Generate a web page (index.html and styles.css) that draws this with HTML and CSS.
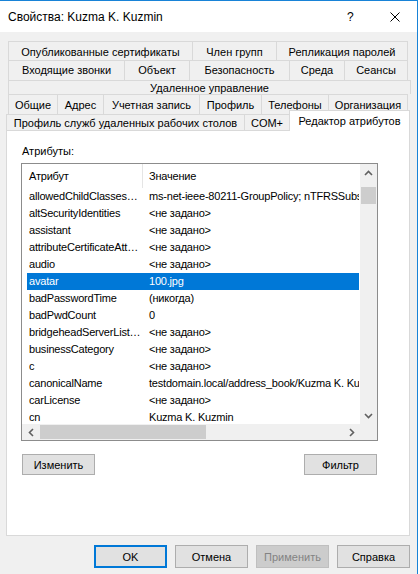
FILE: index.html
```html
<!DOCTYPE html>
<html>
<head>
<meta charset="utf-8">
<title>Свойства: Kuzma K. Kuzmin</title>
<link rel="stylesheet" href="styles.css">
</head>
<body>
<div class="window">
  <div class="titlebar">
    <span class="title">Свойства: Kuzma K. Kuzmin</span>
    <span class="tb-help">?</span>
    <svg class="tb-close" width="10" height="10" viewBox="0 0 10 10"><path d="M0.5 0.5 L9.5 9.5 M9.5 0.5 L0.5 9.5" stroke="#000" stroke-width="1" fill="none"/></svg>
  </div>
  <div class="client">
    <div class="tabs">
      <div class="tabrow r1">
        <div class="tab">Опубликованные сертификаты</div>
        <div class="tab">Член групп</div>
        <div class="tab">Репликация паролей</div>
      </div>
      <div class="tabrow r2">
        <div class="tab">Входящие звонки</div>
        <div class="tab">Объект</div>
        <div class="tab">Безопасность</div>
        <div class="tab">Среда</div>
        <div class="tab">Сеансы</div>
      </div>
      <div class="tabrow r3">
        <div class="tab">Удаленное управление</div>
      </div>
      <div class="tabrow r4">
        <div class="tab">Общие</div>
        <div class="tab">Адрес</div>
        <div class="tab">Учетная запись</div>
        <div class="tab">Профиль</div>
        <div class="tab">Телефоны</div>
        <div class="tab">Организация</div>
      </div>
      <div class="tabrow r5">
        <div class="tab">Профиль служб удаленных рабочих столов</div>
        <div class="tab">COM+</div>
        <div class="tab active">Редактор атрибутов</div>
      </div>
    </div>
    <div class="panel">
      <div class="label">Атрибуты:</div>
      <div class="list">
        <div class="list-content">
          <div class="list-header">
            <div class="h1">Атрибут</div>
            <div class="h2">Значение</div>
          </div>
          <div class="row"><div class="a">allowedChildClassesEffective</div><div class="v">ms-net-ieee-80211-GroupPolicy; nTFRSSubscriptions; msDS-App</div></div>
          <div class="row"><div class="a">altSecurityIdentities</div><div class="v">&lt;не задано&gt;</div></div>
          <div class="row"><div class="a">assistant</div><div class="v">&lt;не задано&gt;</div></div>
          <div class="row"><div class="a">attributeCertificateAttribute</div><div class="v">&lt;не задано&gt;</div></div>
          <div class="row"><div class="a">audio</div><div class="v">&lt;не задано&gt;</div></div>
          <div class="row sel"><div class="a">avatar</div><div class="v">100.jpg</div></div>
          <div class="row"><div class="a">badPasswordTime</div><div class="v">(никогда)</div></div>
          <div class="row"><div class="a">badPwdCount</div><div class="v">0</div></div>
          <div class="row"><div class="a">bridgeheadServerListBL</div><div class="v">&lt;не задано&gt;</div></div>
          <div class="row"><div class="a">businessCategory</div><div class="v">&lt;не задано&gt;</div></div>
          <div class="row"><div class="a">c</div><div class="v">&lt;не задано&gt;</div></div>
          <div class="row"><div class="a">canonicalName</div><div class="v">testdomain.local/address_book/Kuzma K. Kuzmin</div></div>
          <div class="row"><div class="a">carLicense</div><div class="v">&lt;не задано&gt;</div></div>
          <div class="row"><div class="a">cn</div><div class="v">Kuzma K. Kuzmin</div></div>
          <div class="row"><div class="a">co</div><div class="v">&lt;не задано&gt;</div></div>
        </div>
        <div class="vscroll">
          <div class="arrow"><svg width="9" height="6" viewBox="0 0 9 6"><path d="M1 5 L4.5 1.5 L8 5" stroke="#606060" stroke-width="1.6" fill="none"/></svg></div>
          <div class="vtrack"><div class="vthumb"></div></div>
          <div class="arrow"><svg width="9" height="6" viewBox="0 0 9 6"><path d="M1 1 L4.5 4.5 L8 1" stroke="#606060" stroke-width="1.6" fill="none"/></svg></div>
        </div>
        <div class="hscroll">
          <div class="harrow"><svg width="6" height="9" viewBox="0 0 6 9"><path d="M5 1 L1.5 4.5 L5 8" stroke="#606060" stroke-width="1.6" fill="none"/></svg></div>
          <div class="htrack"><div class="hthumb"></div></div>
          <div class="harrow"><svg width="6" height="9" viewBox="0 0 6 9"><path d="M1 1 L4.5 4.5 L1 8" stroke="#606060" stroke-width="1.6" fill="none"/></svg></div>
        </div>
        <div class="corner"></div>
      </div>
      <div class="panel-buttons">
        <button class="btn">Изменить</button>
        <button class="btn">Фильтр</button>
      </div>
    </div>
    <div class="footer">
      <button class="btn big default">OK</button>
      <button class="btn big">Отмена</button>
      <button class="btn big disabled">Применить</button>
      <button class="btn big">Справка</button>
    </div>
  </div>
</div>
</body>
</html>
```
FILE: styles.css
```css
* { box-sizing: border-box; }
html, body { margin: 0; padding: 0; }
body {
  width: 420px;
  height: 574px;
  overflow: hidden;
  background: #ffffff;
  font-family: "Liberation Sans", Arial, sans-serif;
  font-size: 11px;
  color: #000;
}
.window {
  width: 418px;
  height: 574px;
  border-top: 1px solid #1883d7;
  border-right: 1px solid #1883d7;
  background: #f0f0f0;
  display: flex;
  flex-direction: column;
}
.titlebar {
  flex: none;
  height: 31px;
  background: #fff;
  display: flex;
  align-items: center;
  padding-left: 8px;
  padding-right: 17px;
}
.title { flex: 1; font-size: 12px; }
.tb-help { width: 43px; font-size: 12px; }
.tb-close { display: block; }

.client { flex: 1; padding-top: 9px; }

.tabrow { display: grid; }
.tab {
  border-top: 1px solid #d9d9d9;
  border-left: 1px solid #d9d9d9;
  text-align: center;
  white-space: nowrap;
  overflow: hidden;
  background: #f0f0f0;
}
.tab:last-child { border-right: 1px solid #d9d9d9; }
.r1 { margin-left: 8px; grid-template-columns: 184px 84px 132px; grid-template-rows: 19px; }
.r1 .tab { line-height: 20px; }
.r2 { margin-left: 8px; grid-template-columns: 116px 65px 100px 55px 64px; grid-template-rows: 20px; }
.r2 .tab { line-height: 19px; }
.r3 { margin-left: 8px; grid-template-columns: 403px; grid-template-rows: 14px; }
.r3 .tab { line-height: 14px; }
.r4 { margin-left: 8px; grid-template-columns: 49px 46px 96px 62px 67px 80px; grid-template-rows: 20px; }
.r4 .tab { line-height: 20px; }
.r5 { margin-left: 6px; grid-template-columns: 238px 45px 121px; grid-template-rows: 16px; }
.r5 .tab { line-height: 16px; }
.r5 .tab.active {
  position: relative;
  z-index: 1;
  margin-top: -4px;
  margin-bottom: -1px;
  height: 21px;
  line-height: 20px;
  background: #fff;
  border-right: 1px solid #d9d9d9;
}

.panel {
  margin-left: 6px;
  width: 404px;
  height: 406px;
  background: #fff;
  border: 1px solid #d9d9d9;
  padding: 14px 0 0 14px;
}
.label { height: 13px; line-height: 13px; padding-left: 1px; }

.list {
  margin-top: 5px;
  width: 357px;
  height: 278px;
  border: 1px solid #8c8c8c;
  display: grid;
  grid-template-columns: 338px 17px;
  grid-template-rows: 260px 16px;
}
.list-content { overflow: hidden; background: #fff; letter-spacing: -0.2px; }
.list-header { display: flex; height: 24px; line-height: 24px; }
.h1 { width: 121px; padding-left: 7px; border-right: 1px solid #e5e5e5; }
.h2 { padding-left: 6px; }
.row {
  display: flex;
  margin-left: 5px;
  width: 332px;
  height: 17px;
  line-height: 17px;
  white-space: nowrap;
}
.row .a {
  flex: none;
  width: 116px;
  padding: 0 2px 0 2px;
  overflow: hidden;
  text-overflow: ellipsis;
}
.row .v { flex: 1; padding-left: 6px; overflow: hidden; }
.row.sel { background: #0078d7; color: #fff; }

.vscroll { background: #f0f0f0; display: flex; flex-direction: column; }
.vscroll .arrow { height: 17px; display: flex; align-items: center; justify-content: center; flex: none; }
.vtrack { flex: 1; padding: 6px 1px 0 1px; }
.vthumb { height: 17px; background: #cdcdcd; }
.hscroll { background: #f0f0f0; display: flex; }
.harrow { width: 17px; flex: none; display: flex; align-items: center; justify-content: center; }
.htrack { flex: 1; padding: 1px 0 1px 1px; }
.hthumb { width: 166px; height: 14px; background: #cdcdcd; }
.corner { background: #f0f0f0; }

.btn {
  font-family: "Liberation Sans", Arial, sans-serif;
  font-size: 11px;
  font-weight: normal;
  color: #000;
  background: #e1e1e1;
  border: 1px solid #adadad;
  border-radius: 0;
  padding: 0;
  margin: 0;
  width: 73px;
  height: 21px;
}
.panel-buttons {
  margin-top: 13px;
  margin-left: 1px;
  width: 355px;
  display: flex;
  justify-content: space-between;
}
.footer {
  margin-top: 9px;
  padding-right: 7px;
  display: flex;
  justify-content: flex-end;
  gap: 8px;
}
.btn.big { width: 73px; height: 23px; }
.btn.default { border: 2px solid #0078d7; }
.btn.disabled { background: #cccccc; border-color: #bfbfbf; color: #838383; }
```
